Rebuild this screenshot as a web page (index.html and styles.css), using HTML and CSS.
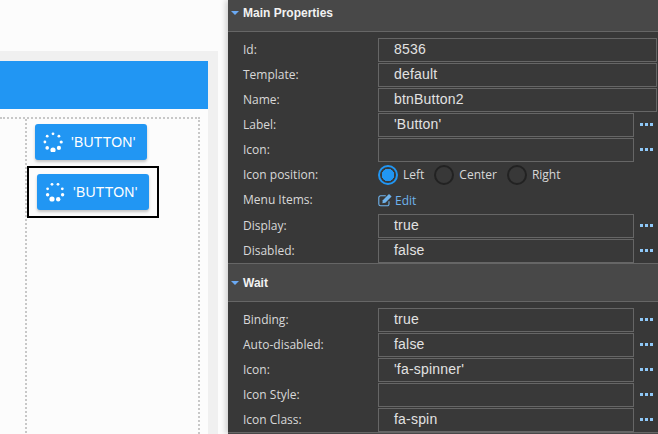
FILE: index.html
```html
<!DOCTYPE html>
<html lang="en">
<head>
<meta charset="utf-8">
<title>Button properties</title>
<link rel="stylesheet" href="styles.css">
</head>
<body>
<div class="app">
  <main class="stage">
    <div class="frame">
      <div class="canvas">
        <div class="banner"></div>
        <div class="grid">
          <div class="cell-left"></div>
          <div class="cell-right">
            <div class="btn-slot">
              <button class="btn" type="button">
                <svg class="spinner" width="20" height="20" viewBox="0 0 20 20"><g fill="#fff"><circle cx="10" cy="1.8" r="1.4"/><circle cx="15.9" cy="4.2" r="1.4"/><circle cx="18.2" cy="10" r="1.6"/><circle cx="15.9" cy="15.9" r="2.1"/><circle cx="10" cy="18" r="2.6"/><circle cx="4.2" cy="15.9" r="1.8"/><circle cx="1.9" cy="10" r="1.4"/><circle cx="4.2" cy="4.2" r="1.4"/></g></svg>
                <span>'BUTTON'</span>
              </button>
            </div>
            <div class="btn-slot selected">
              <button class="btn" type="button">
                <svg class="spinner" width="20" height="20" viewBox="0 0 20 20"><g fill="#fff"><circle cx="7" cy="2.3" r="1.4"/><circle cx="13" cy="2.3" r="1.4"/><circle cx="17.3" cy="6.8" r="1.4"/><circle cx="17.6" cy="12.8" r="1.7"/><circle cx="13.2" cy="17.2" r="2.2"/><circle cx="7" cy="17" r="2.6"/><circle cx="2.6" cy="12.8" r="1.7"/><circle cx="2.6" cy="6.8" r="1.4"/></g></svg>
                <span>'BUTTON'</span>
              </button>
            </div>
          </div>
        </div>
      </div>
    </div>
  </main>
  <aside class="panel">
    <div class="panel-scroll">
      <section class="section">
        <h2 class="section-head"><span class="caret"></span>Main Properties</h2>
        <div class="section-body">
          <div class="row"><span class="label">Id:</span><div class="field full">8536</div></div>
          <div class="row"><span class="label">Template:</span><div class="field full">default</div></div>
          <div class="row"><span class="label">Name:</span><div class="field full">btnButton2</div></div>
          <div class="row"><span class="label">Label:</span><div class="field">'Button'</div><div class="more"><i></i><i></i><i></i></div></div>
          <div class="row"><span class="label">Icon:</span><div class="field"></div><div class="more"><i></i><i></i><i></i></div></div>
          <div class="row"><span class="label">Icon position:</span>
            <div class="radios">
              <span class="radio on"></span><span class="radio-text">Left</span>
              <span class="radio"></span><span class="radio-text">Center</span>
              <span class="radio"></span><span class="radio-text">Right</span>
            </div>
          </div>
          <div class="row tall"><span class="label">Menu Items:</span>
            <a class="edit" href="#">
              <svg width="15" height="14" viewBox="0 0 15 14" fill="none"><path d="M11 8.2V11a1.8 1.8 0 0 1-1.8 1.8H2.6A1.8 1.8 0 0 1 .8 11V4.6A1.8 1.8 0 0 1 2.6 2.8h5.2" stroke="#6fb3ec" stroke-width="1.1"/><path d="M4.8 7.2 11 1l2.6 2.6-6.2 6.2-3 .5z" fill="#6fb3ec"/></svg>
              <span>Edit</span>
            </a>
          </div>
          <div class="row"><span class="label">Display:</span><div class="field">true</div><div class="more"><i></i><i></i><i></i></div></div>
          <div class="row"><span class="label">Disabled:</span><div class="field">false</div><div class="more"><i></i><i></i><i></i></div></div>
        </div>
      </section>
      <section class="section">
        <h2 class="section-head"><span class="caret"></span>Wait</h2>
        <div class="section-body">
          <div class="row"><span class="label">Binding:</span><div class="field">true</div><div class="more"><i></i><i></i><i></i></div></div>
          <div class="row"><span class="label">Auto-disabled:</span><div class="field">false</div><div class="more"><i></i><i></i><i></i></div></div>
          <div class="row"><span class="label">Icon:</span><div class="field">'fa-spinner'</div><div class="more"><i></i><i></i><i></i></div></div>
          <div class="row"><span class="label">Icon Style:</span><div class="field"></div><div class="more"><i></i><i></i><i></i></div></div>
          <div class="row"><span class="label">Icon Class:</span><div class="field">fa-spin</div><div class="more"><i></i><i></i><i></i></div></div>
        </div>
      </section>
      <section class="section">
        <h2 class="section-head"></h2>
      </section>
    </div>
  </aside>
</div>
</body>
</html>
```

FILE: styles.css
```css
* { box-sizing: border-box; }

html, body {
  margin: 0;
  height: 100%;
  overflow: hidden;
}

.app {
  display: flex;
  width: 658px;
  height: 434px;
  font-family: "Open Sans", "Liberation Sans", sans-serif;
  overflow: hidden;
}

/* Canvas side */
.stage {
  width: 228px;
  flex: none;
  background: #fcfcfc;
  padding: 51px 10px 0 0;
}

.frame {
  height: 100%;
  background: #f0f0f0;
  padding: 10px 10px 0 0;
}

.canvas {
  height: 100%;
  background: #fcfcfc;
}

.banner {
  height: 48px;
  background: #2196f3;
}

.grid {
  display: flex;
  width: 200px;
  height: 400px;
  margin-top: 8px;
  border-top: 2px dotted #c8c8c8;
  border-right: 2px dotted #c8c8c8;
}

.cell-left {
  width: 27px;
  flex: none;
  border-right: 2px dotted #c8c8c8;
}

.cell-right {
  flex: 1;
  min-width: 0;
}

.btn-slot {
  padding: 5px 0 6px 8px;
}

.btn-slot.selected {
  width: 132px;
  height: 52px;
  padding: 6px 0 0 8px;
  border: 2px solid #000;
}

.btn {
  display: flex;
  align-items: center;
  width: 112px;
  height: 36px;
  padding: 0 0 0 8px;
  gap: 8px;
  border: 0;
  border-radius: 3px;
  background: #2196f3;
  color: #fff;
  font: 14px "Liberation Sans", Arial, sans-serif;
  letter-spacing: 0.25px;
  box-shadow: 0 2px 3px rgba(0, 0, 0, 0.22);
}

.spinner {
  flex: none;
}

/* Properties panel */
.panel {
  flex: 1;
  min-width: 0;
  background: #383838;
  color: #d8d8d8;
  box-shadow: -2px 0 6px rgba(0, 0, 0, 0.2);
  position: relative;
}

.panel-scroll {
  margin-top: -7px;
}

.section-head {
  display: flex;
  align-items: center;
  height: 39px;
  margin: 0;
  padding-left: 3px;
  border-top: 1px solid #666;
  border-bottom: 1px solid #666;
  background: #484848;
  color: #f2f2f2;
  font-family: "Liberation Sans", Arial, sans-serif;
  font-size: 12px;
  font-weight: 700;
}

.caret {
  width: 0;
  height: 0;
  margin-right: 4px;
  border-left: 4px solid transparent;
  border-right: 4px solid transparent;
  border-top: 4px solid #6aa9f4;
}

.section-body {
  padding-top: 5px;
}

.row {
  display: flex;
  align-items: center;
  height: 25px;
  padding-left: 15px;
}

.row.tall {
  height: 26px;
}

.row.tall .label {
  padding-bottom: 2px;
}

.label {
  width: 135px;
  flex: none;
  font-size: 12px;
}

.field {
  width: 256px;
  height: 24px;
  flex: none;
  padding-left: 15px;
  border: 1px solid #666;
  background: #393939;
  color: #e2e2e2;
  font-family: "Liberation Sans", Arial, sans-serif;
  font-size: 14px;
  letter-spacing: 0.2px;
  line-height: 21px;
  white-space: nowrap;
  overflow: hidden;
}

.field.full {
  width: 279px;
}

.more {
  display: flex;
  gap: 2px;
  margin-left: 6px;
}

.more i {
  display: block;
  width: 3px;
  height: 3px;
  background: #8fc8f8;
}

.radios {
  display: flex;
  align-items: center;
}

.radio {
  width: 20px;
  height: 20px;
  flex: none;
  border: 2px solid #222;
  border-radius: 50%;
  margin-right: 5px;
}

.radio.on {
  border-color: #2196f3;
  background: radial-gradient(circle, #2196f3 0 6px, transparent 6.5px);
}

.radio-text {
  margin-right: 10px;
  font-size: 12px;
}

.edit {
  display: flex;
  align-items: center;
  gap: 2px;
  color: #6fb3ec;
  font-size: 12px;
  text-decoration: none;
}
```
